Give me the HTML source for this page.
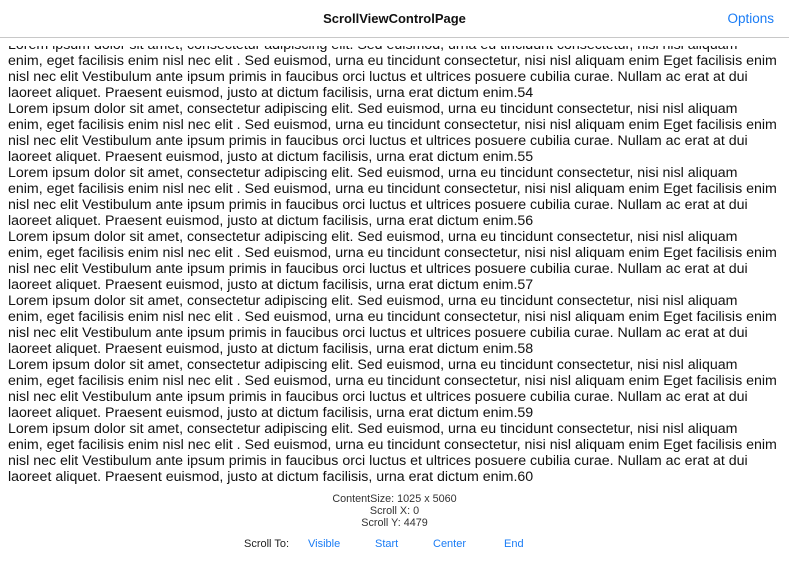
<!DOCTYPE html>
<html><head><meta charset="utf-8"><style>
html,body{margin:0;padding:0;background:#fff;width:789px;height:563px;overflow:hidden;font-family:"Liberation Sans",Arial,sans-serif;}
.hdr{position:absolute;left:0;top:0;width:789px;height:37px;border-bottom:1px solid #c8c8c8;background:#fff;}
.title{position:absolute;left:0;width:789px;top:11px;text-align:center;font-size:13px;font-weight:bold;color:#111;}
.opt{position:absolute;right:15px;top:11px;font-size:13.5px;color:#1a7cf5;}
.clip{position:absolute;left:0;top:46px;width:789px;height:442px;overflow:hidden;}
.txt{position:absolute;left:8px;top:-9px;font-size:14.2px;line-height:16px;color:#111;white-space:nowrap;}
.info{position:absolute;left:0;width:789px;text-align:center;font-size:10.8px;color:#333;line-height:12px;}
.btn{position:absolute;top:538px;font-size:11px;}
</style></head><body>
<div class="hdr"><div class="title">ScrollViewControlPage</div><div class="opt">Options</div></div>
<div class="clip"><div class="txt" id="t"></div></div>
<div class="info" style="top:493px">ContentSize: 1025 x 5060<br>Scroll X: 0<br>Scroll Y: 4479</div>
<div class="btn" style="left:244px;color:#222">Scroll To:</div>
<div class="btn" style="left:308px;color:#1a7cf5">Visible</div>
<div class="btn" style="left:375px;color:#1a7cf5">Start</div>
<div class="btn" style="left:433px;color:#1a7cf5">Center</div>
<div class="btn" style="left:504px;color:#1a7cf5">End</div>
<script>
var a="Lorem ipsum dolor sit amet, consectetur adipiscing elit. Sed euismod, urna eu tincidunt consectetur, nisi nisl aliquam",
b="enim, eget facilisis enim nisl nec elit . Sed euismod, urna eu tincidunt consectetur, nisi nisl aliquam enim Eget facilisis enim",
c="nisl nec elit Vestibulum ante ipsum primis in faucibus orci luctus et ultrices posuere cubilia curae. Nullam ac erat at dui",
d="laoreet aliquet. Praesent euismod, justo at dictum facilisis, urna erat dictum enim.";
var h="";for(var i=54;i<=60;i++){h+=a+"<br>"+b+"<br>"+c+"<br>"+d+i+"<br>";}
document.getElementById("t").innerHTML=h;
</script>
</body></html>
